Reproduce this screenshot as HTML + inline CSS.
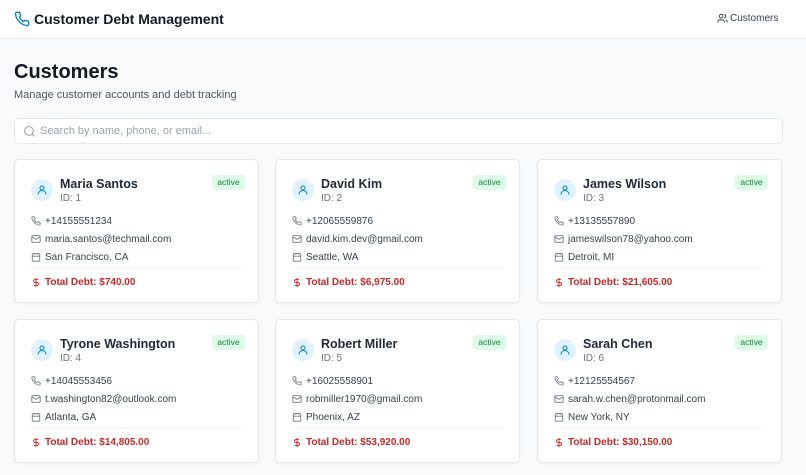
<!DOCTYPE html>
<html><head><style>
*{box-sizing:border-box;margin:0;padding:0}
body{width:806px;height:475px;overflow:hidden;background:#f9fafb;font-family:"Liberation Sans",sans-serif;color:#111827}
.hdr{position:absolute;left:0;top:0;width:806px;height:39px;background:#fff;border-bottom:1px solid #e5e7eb}
.hdr .t{position:absolute;left:34px;top:11px;font-size:14px;font-weight:bold}
.hdr .nav{position:absolute;left:717px;top:13px;font-size:10px;color:#374151}
h1{position:absolute;left:14px;top:61px;font-size:20px;font-weight:bold}
.sub{position:absolute;left:14px;top:89px;font-size:11px;color:#4b5563}
.search{position:absolute;left:14px;top:118px;width:769px;height:26px;background:#fff;border:1px solid #e5e7eb;border-radius:5px}
.search span{position:absolute;left:25px;top:6px;font-size:11px;color:#9ca3af}
.card{position:absolute;width:245px;height:144px;background:#fff;border:1px solid #e5e7eb;border-radius:5px;box-shadow:0 1px 2px rgba(0,0,0,.05)}
.av{position:absolute;left:16px;top:19px;width:22px;height:22px;border-radius:50%;background:#e0f2fe}
.av svg{position:absolute;left:5px;top:5px}
.nm{position:absolute;left:45px;top:17px;font-size:12.5px;font-weight:bold;color:#1f2937}
.id{position:absolute;left:45px;top:33px;font-size:10px;color:#6b7280}
.bd{position:absolute;left:197px;top:15px;width:33px;height:15px;background:#dcfce7;color:#15803d;font-size:8.5px;border-radius:3px;text-align:center;line-height:15px}
.r{position:absolute;left:16px;font-size:10px;color:#374151}
.r svg{position:absolute;left:0;top:0}
.r span{position:absolute;left:14px;top:0;white-space:nowrap}
.dv{position:absolute;left:16px;right:16px;top:108px;border-top:1px solid #f3f4f6}
.debt{position:absolute;left:16px;top:117px;font-size:10px;font-weight:bold;color:#c62828}
.debt span{position:absolute;left:14px;white-space:nowrap}
</style></head><body>
<div class="hdr">
<svg style="position:absolute;left:14px;top:11px" width="16" height="16" viewBox="0 0 24 24" fill="none" stroke="#0284c7" stroke-width="2" stroke-linecap="round" stroke-linejoin="round"><path d="M22 16.9v3a2 2 0 0 1-2.2 2 19.8 19.8 0 0 1-8.6-3.1 19.5 19.5 0 0 1-6-6 19.8 19.8 0 0 1-3.1-8.7A2 2 0 0 1 4.1 2h3a2 2 0 0 1 2 1.7c.1 1 .4 1.9.7 2.8a2 2 0 0 1-.5 2.1L8 9.9a16 16 0 0 0 6 6l1.3-1.3a2 2 0 0 1 2.1-.4c.9.3 1.8.6 2.8.7a2 2 0 0 1 1.7 2z"/></svg>
<div class="t">Customer Debt Management</div>
<div class="nav"><svg style="position:absolute;left:0;top:0" width="11" height="11" viewBox="0 0 24 24" fill="none" stroke="#374151" stroke-width="2"><circle cx="9" cy="7" r="4"/><path d="M16 21v-2a4 4 0 0 0-4-4H6a4 4 0 0 0-4 4v2M22 21v-2a4 4 0 0 0-3-3.9M16 3.1a4 4 0 0 1 0 7.8"/></svg><span style="margin-left:13px">Customers</span></div>
</div>
<h1>Customers</h1>
<div class="sub">Manage customer accounts and debt tracking</div>
<div class="search"><svg style="position:absolute;left:8px;top:6px" width="13" height="13" viewBox="0 0 24 24" fill="none" stroke="#9ca3af" stroke-width="2"><circle cx="11" cy="11" r="8"/><path d="M21 21l-4.3-4.3"/></svg><span>Search by name, phone, or email...</span></div>
<div id="c"></div>
<script>
const d=[["Maria Santos",1,"+14155551234","maria.santos@techmail.com","San Francisco, CA","$740.00"],
["David Kim",2,"+12065559876","david.kim.dev@gmail.com","Seattle, WA","$6,975.00"],
["James Wilson",3,"+13135557890","jameswilson78@yahoo.com","Detroit, MI","$21,605.00"],
["Tyrone Washington",4,"+14045553456","t.washington82@outlook.com","Atlanta, GA","$14,805.00"],
["Robert Miller",5,"+16025558901","robmiller1970@gmail.com","Phoenix, AZ","$53,920.00"],
["Sarah Chen",6,"+12125554567","sarah.w.chen@protonmail.com","New York, NY","$30,150.00"]];
const xs=[14,275,537],ys=[159,319];
const ph='<svg width="10" height="10" viewBox="0 0 24 24" fill="none" stroke="#6b7280" stroke-width="2"><path d="M22 16.9v3a2 2 0 0 1-2.2 2 19.8 19.8 0 0 1-8.6-3.1 19.5 19.5 0 0 1-6-6 19.8 19.8 0 0 1-3.1-8.7A2 2 0 0 1 4.1 2h3a2 2 0 0 1 2 1.7c.1 1 .4 1.9.7 2.8a2 2 0 0 1-.5 2.1L8 9.9a16 16 0 0 0 6 6l1.3-1.3a2 2 0 0 1 2.1-.4c.9.3 1.8.6 2.8.7a2 2 0 0 1 1.7 2z"/></svg>';
const ml='<svg width="10" height="10" viewBox="0 0 24 24" fill="none" stroke="#6b7280" stroke-width="2"><rect x="2" y="4" width="20" height="16" rx="2"/><path d="M22 7l-10 6L2 7"/></svg>';
const cl='<svg width="10" height="10" viewBox="0 0 24 24" fill="none" stroke="#6b7280" stroke-width="2"><rect x="3" y="4" width="18" height="18" rx="2"/><path d="M16 2v4M8 2v4M3 10h18"/></svg>';
let h='';
d.forEach((c,i)=>{h+=`<div class="card" style="left:${xs[i%3]}px;top:${ys[Math.floor(i/3)]}px">
<div class="av"><svg width="12" height="12" viewBox="0 0 24 24" fill="none" stroke="#0284c7" stroke-width="2"><circle cx="12" cy="8" r="4"/><path d="M20 21a8 8 0 0 0-16 0"/></svg></div>
<div class="nm">${c[0]}</div><div class="id">ID: ${c[1]}</div><div class="bd">active</div>
<div class="r" style="top:56px">${ph}<span>${c[2]}</span></div>
<div class="r" style="top:74px">${ml}<span>${c[3]}</span></div>
<div class="r" style="top:92px">${cl}<span>${c[4]}</span></div>
<div class="dv"></div>
<div class="debt"><svg width="10" height="11" viewBox="0 0 24 24" fill="none" stroke="#c62828" stroke-width="2.2"><path d="M12 1v22M17 5H9.5a3.5 3.5 0 0 0 0 7h5a3.5 3.5 0 0 1 0 7H6"/></svg><span>Total Debt: ${c[5]}</span></div></div>`});
document.getElementById('c').innerHTML=h;
</script>
</body></html>
